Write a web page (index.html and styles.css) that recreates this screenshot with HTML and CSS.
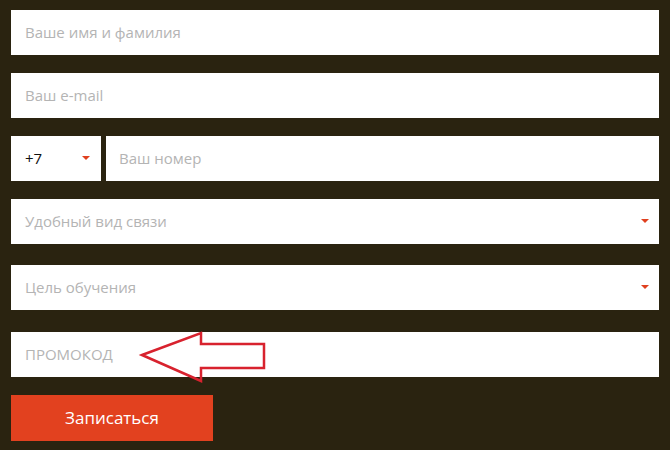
FILE: index.html
```html
<!DOCTYPE html>
<html lang="ru">
<head>
<meta charset="utf-8">
<link rel="stylesheet" href="styles.css">
</head>
<body>
<form class="form">
  <div class="field"><span class="ph">Ваше имя и фамилия</span></div>
  <div class="field"><span class="ph">Ваш e-mail</span></div>
  <div class="row">
    <div class="field code"><span class="val">+7</span><span class="caret"></span></div>
    <div class="field num"><span class="ph">Ваш номер</span></div>
  </div>
  <div class="field select s1"><span class="ph">Удобный вид связи</span><span class="caret"></span></div>
  <div class="field select s2"><span class="ph">Цель обучения</span><span class="caret"></span></div>
  <div class="field promo">
    <span class="ph">ПРОМОКОД</span>
    <svg class="arrow" width="140" height="62" viewBox="0 0 140 62">
      <polygon points="12,30 71,8 71,19 134,19 134,43 71,43 71,56" fill="none" stroke="#d8222e" stroke-width="2.5" stroke-linejoin="miter"/>
    </svg>
  </div>
  <div class="btn">Записаться</div>
</form>
</body>
</html>
```
FILE: styles.css
```css
html, body {
  margin: 0;
  padding: 0;
  background: #2a2310;
}
body {
  width: 670px;
  height: 450px;
  overflow: hidden;
  font-family: "Open Sans", "Noto Sans", sans-serif;
}
.form {
  display: flex;
  flex-direction: column;
  padding: 10px 11px 0 11px;
  margin: 0;
}
.field {
  position: relative;
  height: 45px;
  background: #fff;
  display: flex;
  align-items: center;
  padding: 0 14px 2px 14px;
  box-sizing: border-box;
  margin-bottom: 18px;
}
.ph {
  color: #b4b4b4;
  font-size: 15px;
}
.val {
  color: #111;
  font-size: 15px;
}
.row {
  display: flex;
  gap: 5px;
  margin-bottom: 18px;
}
.row .field {
  margin-bottom: 0;
}
.code {
  width: 90px;
  flex: none;
  justify-content: space-between;
  padding: 0 11px 2px 14px;
}
.num {
  flex: 1;
  padding-left: 13px;
}
.caret {
  width: 0;
  height: 0;
  margin-top: 1px;
  border-left: 4px solid transparent;
  border-right: 4px solid transparent;
  border-top: 4px solid #e0401f;
}
.select {
  justify-content: space-between;
  padding-right: 10px;
}
.s1 {
  margin-bottom: 21px;
}
.s2 {
  margin-bottom: 22px;
}
.arrow {
  position: absolute;
  left: 119px;
  top: -7px;
}
.btn {
  width: 202px;
  height: 46px;
  padding-bottom: 2px;
  box-sizing: border-box;
  background: #e2411f;
  color: #fff;
  font-size: 17px;
  display: flex;
  align-items: center;
  justify-content: center;
}
```
